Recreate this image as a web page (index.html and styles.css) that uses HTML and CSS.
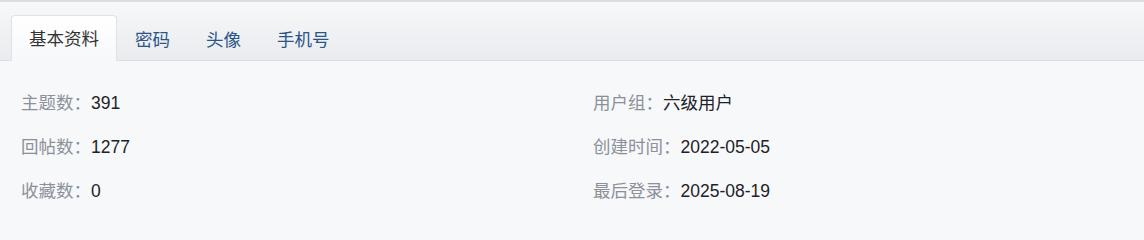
FILE: index.html
```html
<!DOCTYPE html>
<html lang="zh-CN">
<head>
<meta charset="utf-8">
<title>基本资料</title>
<link rel="stylesheet" href="styles.css">
</head>
<body>
<div class="panel">
  <div class="tabs">
    <a class="tab active">基本资料</a>
    <a class="tab">密码</a>
    <a class="tab">头像</a>
    <a class="tab">手机号</a>
  </div>
  <div class="info">
    <div class="item"><span class="label">主题数：</span><span class="value">391</span></div>
    <div class="item"><span class="label">用户组：</span><span class="value">六级用户</span></div>
    <div class="item"><span class="label">回帖数：</span><span class="value">1277</span></div>
    <div class="item"><span class="label">创建时间：</span><span class="value">2022-05-05</span></div>
    <div class="item"><span class="label">收藏数：</span><span class="value">0</span></div>
    <div class="item"><span class="label">最后登录：</span><span class="value">2025-08-19</span></div>
  </div>
</div>
</body>
</html>
```

FILE: styles.css
```css
* { box-sizing: border-box; }
html, body {
  margin: 0;
  padding: 0;
  background: #f7f8fa;
  font-family: "Liberation Sans", "Noto Sans CJK SC", sans-serif;
  font-size: 17.5px;
}
.panel {
  border-top: 2px solid #dcdde1;
}
.tabs {
  display: flex;
  align-items: flex-end;
  height: 59px;
  padding-left: 11px;
  background: linear-gradient(#f7f8fa, #e9ebee);
  border-bottom: 1px solid #dcdee3;
}
.tab {
  display: flex;
  align-items: center;
  height: 45px;
  padding: 0 17px 2px 17px;
  margin-bottom: -1px;
  color: #2b5589;
  border: 1px solid transparent;
  border-bottom: none;
  border-radius: 4px 4px 0 0;
  white-space: nowrap;
  cursor: pointer;
}
.tab.active {
  color: #333;
  background: linear-gradient(#ffffff, #f7f8fa);
  border-color: #dfe1e6;
  height: 46px;
}
.info {
  display: grid;
  grid-template-columns: 1fr 1fr;
  padding-top: 19px;
}
.item {
  height: 44px;
  padding: 9px 0 0 21px;
  white-space: nowrap;
}
.label { color: #8b9199; }
.value { color: #1e2227; }
```
